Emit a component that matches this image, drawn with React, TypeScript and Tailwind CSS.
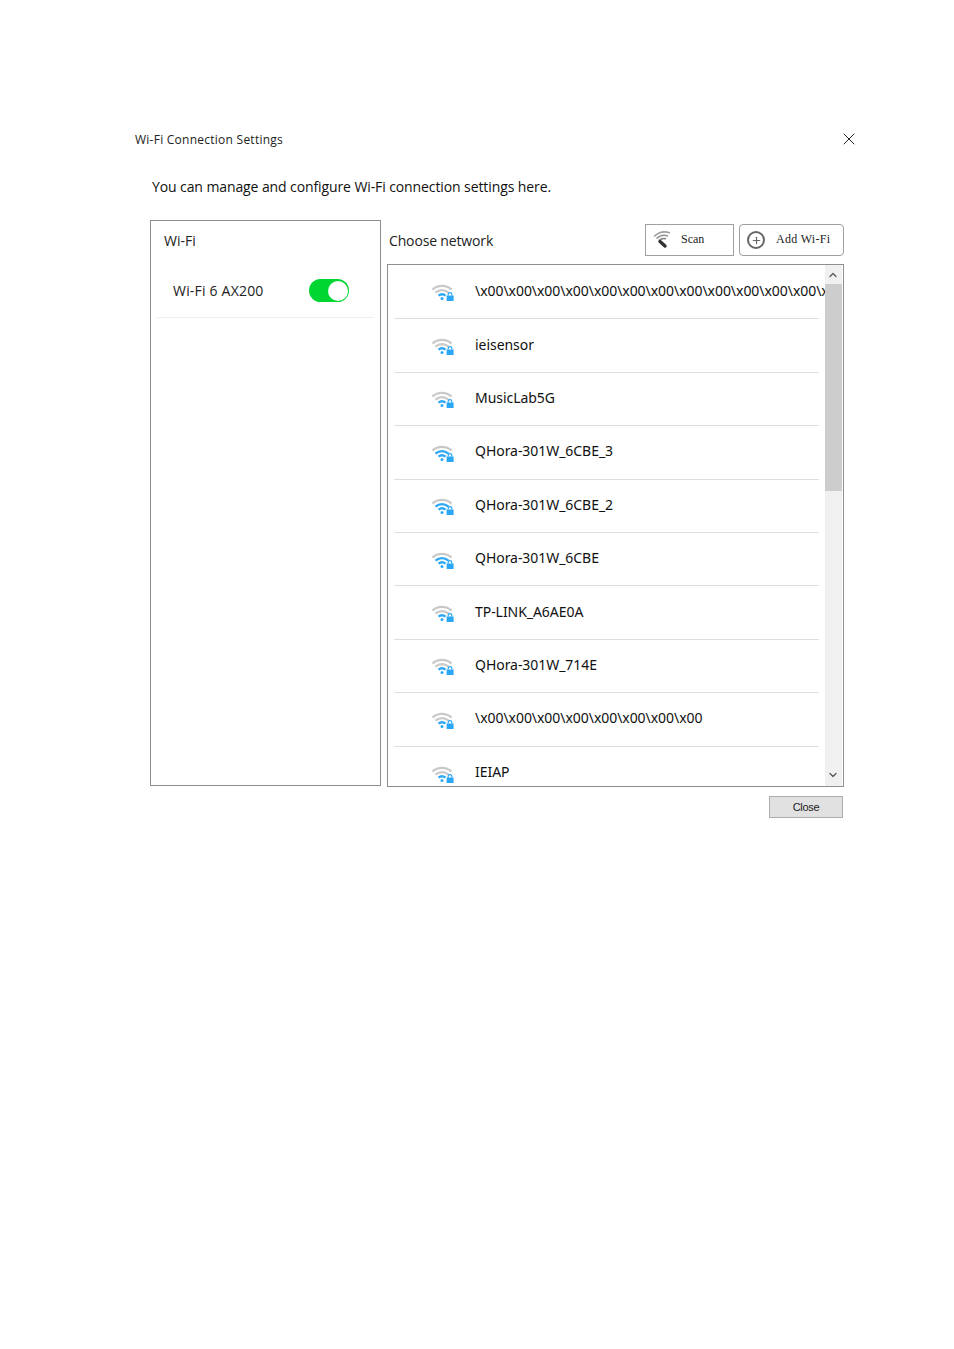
import { ChevronDown, ChevronUp, Plus, X } from "lucide-react";

const networks = [
  { name: "\\x00\\x00\\x00\\x00\\x00\\x00\\x00\\x00\\x00\\x00\\x00\\x00\\x00\\x00\\x00\\x00\\x00\\x00", level: 2 },
  { name: "ieisensor", level: 2 },
  { name: "MusicLab5G", level: 2 },
  { name: "QHora-301W_6CBE_3", level: 3 },
  { name: "QHora-301W_6CBE_2", level: 3 },
  { name: "QHora-301W_6CBE", level: 3 },
  { name: "TP-LINK_A6AE0A", level: 2 },
  { name: "QHora-301W_714E", level: 2 },
  { name: "\\x00\\x00\\x00\\x00\\x00\\x00\\x00\\x00", level: 2 },
  { name: "IEIAP", level: 2 },
];

const WifiLock = ({ level }: { level: number }) => {
  const blue = "#2ba7f5";
  const grey = "#c9c9c9";
  return (
    <svg width="24" height="18" viewBox="0 0 24 18" fill="none" className="mt-[3px] shrink-0">
      <path d="M1.5 5.5C7 0.7 15 0.7 20.5 5.5" stroke={grey} strokeWidth="2.4" />
      <path d="M4.5 8.7C8.5 5.3 13.5 5.3 17.5 8.7" stroke={level > 2 ? blue : grey} strokeWidth="2.4" />
      <path d="M7.5 11.6C9.8 9.8 12.2 9.8 14.5 11.6" stroke={blue} strokeWidth="2.4" />
      <circle cx="11" cy="14.5" r="1.5" fill={blue} />
      <path d="M17.2 11.5V10.2C17.2 8.2 20.8 8.2 20.8 10.2V11.5" stroke={blue} strokeWidth="1.2" />
      <rect x="15.6" y="11.5" width="7" height="5.5" fill={blue} />
    </svg>
  );
};

const ScanIcon = () => (
  <svg width="20" height="20" viewBox="0 0 20 20" fill="none">
    <path d="M2 7.5C7 3 13 2 18 4" stroke="#a0a0a0" strokeWidth="1.6" />
    <path d="M4.5 9.5C8 6.2 12 5.5 16 7" stroke="#909090" strokeWidth="1.6" />
    <path d="M7 11.5C9.5 9.3 11.5 9 14 9.8" stroke="#808080" strokeWidth="1.6" />
    <path d="M8 12.5L13 17" stroke="#333" strokeWidth="3.4" strokeLinecap="round" />
  </svg>
);

export default function App() {
  return (
    <div className="min-h-[1349px] bg-white pt-[132px] pl-[135px] font-['Open_Sans','Noto_Sans',sans-serif] text-black">
      <div className="flex w-[724px] items-center justify-between">
        <span className="text-[12px] leading-[16px] tracking-[0.25px] text-[#222]">Wi-Fi Connection Settings</span>
        <X className="-mt-[4px] -mb-[2px] h-[20px] w-[20px] text-[#222]" strokeWidth={1.2} />
      </div>

      <p className="mt-[29px] ml-[17px] text-[14px] leading-[20px] tracking-[-0.1px] text-[#111]">
        You can manage and configure Wi-Fi connection settings here.
      </p>

      <div className="mt-[23px] ml-[15px] flex w-[694px] gap-[6px]">
        <div className="h-[566px] w-[231px] shrink-0 border border-[#8a8f94] px-[6px]">
          <div className="mt-[11px] ml-[7px] text-[14px] leading-[18px] text-[#222]">Wi-Fi</div>
          <div className="mt-[19px] flex h-[49px] items-center justify-between border-b border-[#eeeeee] pr-[25px] pb-[5px] pl-[16px]">
            <span className="text-[14px] tracking-[0.2px] text-[#222]">Wi-Fi 6 AX200</span>
            <div className="flex h-[23px] w-[40px] items-center justify-end rounded-full bg-[#00d632] pr-[1px]">
              <div className="h-[20px] w-[20px] rounded-full bg-white" />
            </div>
          </div>
        </div>

        <div className="w-[457px] shrink-0">
          <div className="flex h-[44px] items-start">
            <span className="mt-[11px] ml-[2px] text-[14px] leading-[20px] tracking-[-0.15px] text-[#222]">
              Choose network
            </span>
            <div className="mt-[4px] ml-auto flex gap-[5px]">
              <button className="flex h-[32px] w-[89px] items-center border border-[#a0a0a0] pb-[2px] pl-[6px] font-['Liberation_Serif',serif] text-[12px] text-[#222]">
                <ScanIcon />
                <span className="ml-[9px]">Scan</span>
              </button>
              <button className="flex h-[32px] w-[105px] items-center rounded-[4px] border border-[#a0a0a0] pl-[7px] font-['Liberation_Serif',serif] text-[12px] text-[#222]">
                <span className="flex h-[18px] w-[18px] items-center justify-center rounded-full border-2 border-[#666]">
                  <Plus className="h-[11px] w-[11px] text-[#666]" strokeWidth={2.5} />
                </span>
                <span className="mb-[2px] ml-[11px] tracking-[0.3px]">Add Wi-Fi</span>
              </button>
            </div>
          </div>

          <div className="flex h-[523px] overflow-hidden border border-[#8a8f94]">
            <div className="w-[437px] shrink-0 overflow-hidden pl-[6px]">
              {networks.map((n) => (
                <div
                  key={n.name}
                  className="flex h-[53.4px] w-[425px] items-center border-b border-[#dedede] pl-[37px] first:h-[54.4px] last:border-b-0"
                >
                  <WifiLock level={n.level} />
                  <span className="mb-[3px] ml-[20px] whitespace-nowrap font-['Noto_Sans',sans-serif] text-[14px] tracking-[-0.05px] text-[#111]">
                    {n.name}
                  </span>
                </div>
              ))}
            </div>
            <div className="flex w-[17px] shrink-0 flex-col bg-[#f0f0f0] pr-[2px]">
              <div className="flex h-[19px] items-center justify-center">
                <ChevronUp className="h-[12px] w-[12px] text-[#555]" strokeWidth={2.5} />
              </div>
              <div className="-mr-[2px] h-[207px] bg-[#cdcdcd]" />
              <div className="mt-auto flex h-[21px] items-center justify-center pb-[2px]">
                <ChevronDown className="h-[12px] w-[12px] text-[#555]" strokeWidth={2.5} />
              </div>
            </div>
          </div>

          <div className="mt-[9px] flex justify-end pr-[1px]">
            <button className="h-[22px] w-[74px] border border-[#adadad] bg-[#e1e1e1] font-['Liberation_Sans',sans-serif] text-[11px] tracking-[-0.3px] text-[#222]">
              Close
            </button>
          </div>
        </div>
      </div>
    </div>
  );
}
